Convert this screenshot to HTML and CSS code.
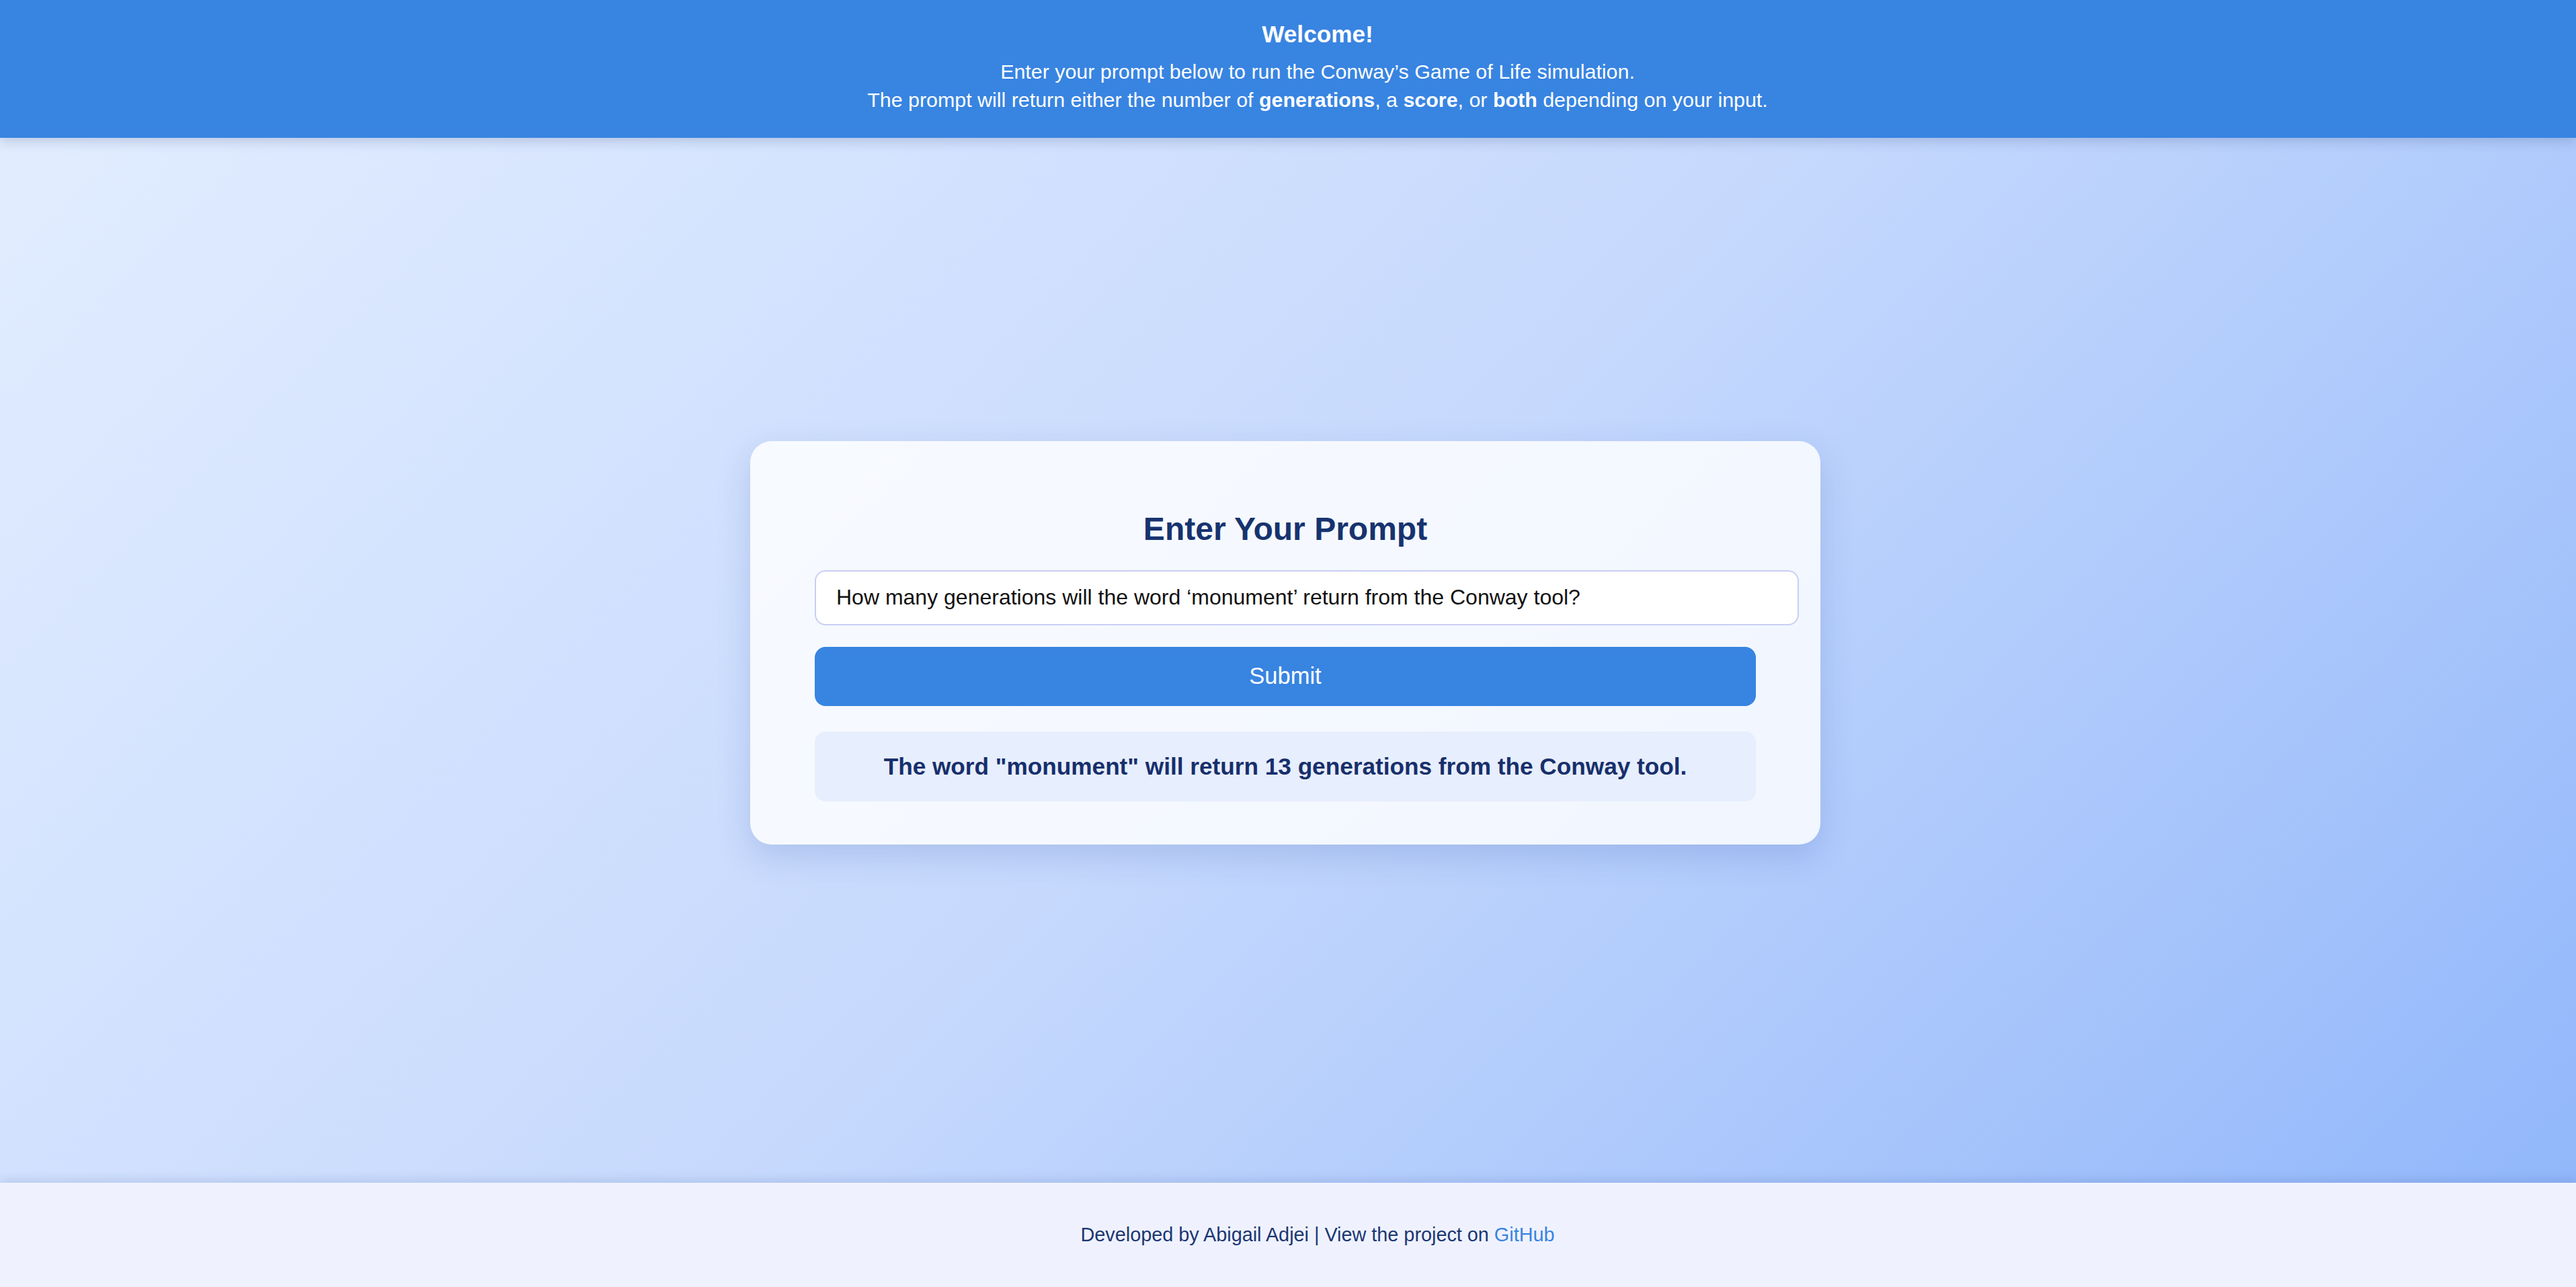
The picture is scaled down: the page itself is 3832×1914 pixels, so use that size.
FILE: index.html
```html
<!DOCTYPE html>
<html lang="en">
<head>
<meta charset="utf-8">
<title>Conway's Game of Life Prompt</title>
<link rel="stylesheet" href="styles.css">
</head>
<body>
<header class="site-header">
  <div class="header-inner">
    <h1 class="welcome">Welcome!</h1>
    <p class="intro">Enter your prompt below to run the Conway’s Game of Life simulation.<br>The prompt will return either the number of <strong>generations</strong>, a <strong>score</strong>, or <strong>both</strong> depending on your input.</p>
  </div>
</header>
<main class="main">
  <section class="card">
    <h2 class="card-title">Enter Your Prompt</h2>
    <input class="prompt-input" type="text" value="How many generations will the word ‘monument’ return from the Conway tool?">
    <button class="submit-btn" type="button">Submit</button>
    <div class="result">The word "monument" will return 13 generations from the Conway tool.</div>
  </section>
</main>
<footer class="site-footer">
  <p class="footer-text">Developed by Abigail Adjei | View the project on <a class="footer-link" href="#">GitHub</a></p>
</footer>
</body>
</html>
```

FILE: styles.css
```css
html, body {
  margin: 0;
  padding: 0;
}

body {
  height: 100vh;
  display: flex;
  flex-direction: column;
  font-family: "Liberation Sans", Arial, sans-serif;
  background: linear-gradient(135deg, #e4eeff 0%, #c6d9fd 50%, #8fb5fa 100%);
  overflow: hidden;
}

.site-header {
  position: relative;
  z-index: 2;
  background: #3884e1;
  color: #ffffff;
  box-shadow: 0 6px 16px rgba(30, 50, 100, 0.18);
}

.header-inner {
  padding: 31px 0 36px 88px;
  text-align: center;
}

.welcome {
  margin: 0 0 14px;
  font-size: 35.2px;
  font-weight: bold;
  line-height: 40px;
}

.intro {
  margin: 0;
  font-size: 30.4px;
  line-height: 42px;
}

.main {
  flex: 1;
  display: flex;
  align-items: center;
  justify-content: center;
  padding-bottom: 53px;
}

.card {
  box-sizing: border-box;
  width: 1592px;
  margin-right: 8px;
  padding: 103px 96px 64px;
  background: rgba(255, 255, 255, 0.82);
  border-radius: 32px;
  box-shadow: 0 18px 50px rgba(40, 70, 160, 0.18);
  text-align: center;
}

.card-title {
  margin: 0 0 34px;
  font-size: 48px;
  font-weight: bold;
  line-height: 55px;
  color: #17336f;
}

.prompt-input {
  display: block;
  box-sizing: content-box;
  width: 100%;
  height: 78px;
  margin: 0 0 32px;
  padding: 0 30px;
  border: 2px solid #c8cef4;
  border-radius: 16px;
  background: #ffffff;
  font-family: "Liberation Sans", Arial, sans-serif;
  font-size: 32px;
  color: #111111;
  outline: none;
}

.submit-btn {
  display: block;
  width: 100%;
  height: 88px;
  margin: 0 0 38px;
  border: none;
  border-radius: 16px;
  background: #3884e1;
  color: #ffffff;
  font-family: "Liberation Sans", Arial, sans-serif;
  font-size: 34.5px;
}

.result {
  box-sizing: border-box;
  height: 104px;
  display: flex;
  align-items: center;
  justify-content: center;
  border-radius: 16px;
  background: #e7eefd;
  color: #172f6c;
  font-size: 35.2px;
  font-weight: bold;
}

.site-footer {
  position: relative;
  z-index: 2;
  height: 155px;
  display: flex;
  align-items: center;
  justify-content: center;
  padding-left: 88px;
  background: #eff2fe;
  box-shadow: 0 -4px 14px rgba(30, 60, 130, 0.14);
}

.footer-text {
  margin: 0;
  font-size: 28.8px;
  color: #1b3672;
}

.footer-link {
  color: #3884e1;
  text-decoration: none;
}
```
